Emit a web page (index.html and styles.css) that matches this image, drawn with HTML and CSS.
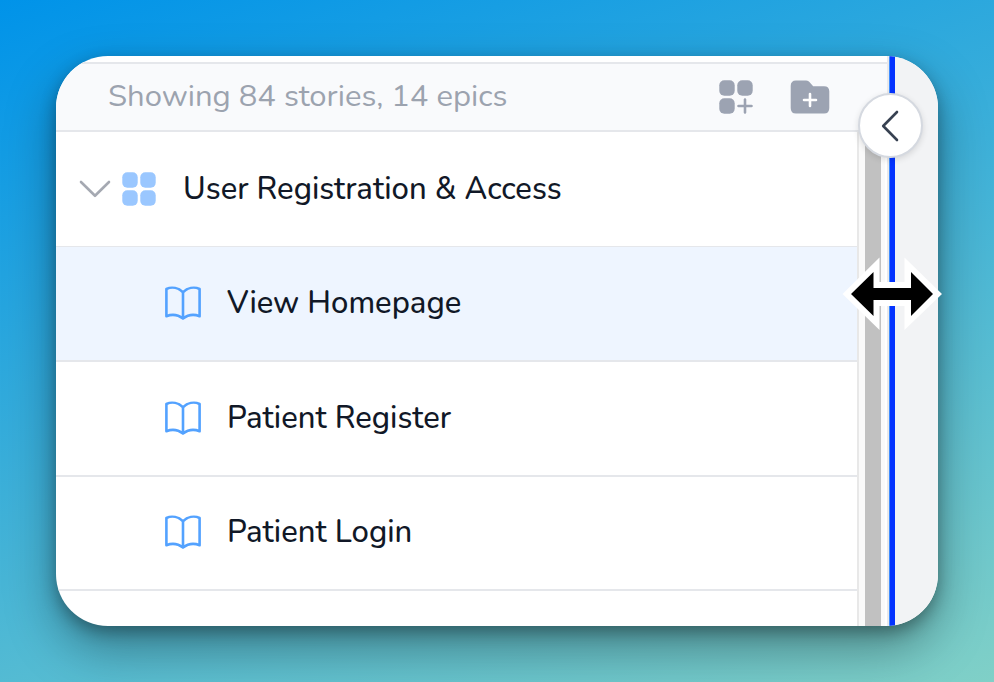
FILE: index.html
```
<!DOCTYPE html>
<html lang="en">
<head>
  <meta charset="UTF-8" />
  <meta name="viewport" content="width=device-width, initial-scale=1.0"/>
  <title>Stories</title>
  <link rel="stylesheet" href="styles.css">
</head>
<body>
  <!-- Shared icons -->
  <svg class="sprite">
    <symbol id="book" viewBox="0 0 38 36">
      <path d="M19 7.2C14.5 3 8 1.4 2.4 4V31.2C8 29 14.5 30 19 33.6C23.5 30 30 29 35.6 31.2V4C30 1.4 23.5 3 19 7.2ZM19 7.2V33" fill="none" stroke="#53a2ff" stroke-width="2.6" stroke-linejoin="round"/>
    </symbol>
  </svg>

  <div class="card">
    <div class="main">
      <div class="header">
        <span class="summary">Showing 84 stories, 14 epics</span>
        <svg class="add-epic" viewBox="0 0 34 34" fill="#9ca3b2">
          <rect x="0.3" y="0.3" width="15.4" height="15.4" rx="5"/>
          <rect x="18.3" y="0.3" width="15.4" height="15.4" rx="5"/>
          <rect x="0.3" y="18.3" width="15.4" height="15.4" rx="5"/>
          <path d="M26 19.5V32.5M19.5 26H32.5" stroke="#9ca3b2" stroke-width="2.6" stroke-linecap="round"/>
        </svg>
        <svg class="add-folder" viewBox="0 0 40 34">
          <path d="M6 0.5H16C18.3 0.5 19 1.5 20.3 3L23.2 6.3H34Q39.3 6.3 39.3 11.5V28Q39.3 33.5 34 33.5H6Q0.7 33.5 0.7 28V6Q0.7 0.5 6 0.5Z" fill="#9ca3b2"/>
          <path d="M20 14V26M14 20H26" stroke="#fff" stroke-width="2.6" stroke-linecap="round"/>
        </svg>
      </div>

      <div class="body">
        <div class="list">
          <div class="row epic">
            <svg class="chevron" viewBox="0 0 32 18">
              <path d="M2 2L16 15.8L30 2" fill="none" stroke="#a5a9b2" stroke-width="2.6" stroke-linecap="round" stroke-linejoin="round"/>
            </svg>
            <svg class="epic-icon" viewBox="0 0 34 34" fill="#9ac7ff">
              <rect x="0.3" y="0.3" width="15.4" height="15.4" rx="5"/>
              <rect x="18.3" y="0.3" width="15.4" height="15.4" rx="5"/>
              <rect x="0.3" y="18.3" width="15.4" height="15.4" rx="5"/>
              <rect x="18.3" y="18.3" width="15.4" height="15.4" rx="5"/>
            </svg>
            <span class="title">User Registration &amp; Access</span>
          </div>
          <div class="row story selected">
            <svg class="book"><use href="#book"/></svg>
            <span class="title">View Homepage</span>
          </div>
          <div class="row story">
            <svg class="book"><use href="#book"/></svg>
            <span class="title">Patient Register</span>
          </div>
          <div class="row story">
            <svg class="book"><use href="#book"/></svg>
            <span class="title">Patient Login</span>
          </div>
        </div>
        <div class="scrollbar"><div class="thumb"></div></div>
      </div>
    </div>
    <div class="resizer"></div>
    <div class="side"></div>
  </div>

  <!-- Collapse button and resize cursor sit over the divider -->
  <div class="collapse">
    <svg viewBox="0 0 18 32">
      <path d="M16 2L2.2 16L16 30" fill="none" stroke="#374151" stroke-width="2.6" stroke-linecap="round" stroke-linejoin="round"/>
    </svg>
  </div>
  <svg class="cursor" viewBox="0 0 101 74">
    <path d="M0.5 37L37.5 0.5V25H62.5V0.5L100 37L62.5 73V49H37.5V73Z" fill="#fff"/>
    <path d="M9 37L31.5 15V31H69V15L91 37L69 59V43H31.5V59Z" fill="#000"/>
  </svg>
</body>
</html>
```
FILE: styles.css
```
* {
  box-sizing: border-box;
}
body {
  margin: 0;
  padding: 56px;
  height: 682px;
  position: relative;
  overflow: hidden;
  font-family: Nunito, Lato, sans-serif;
  background: linear-gradient(160deg, #0093e9 0%, #80d0c7 100%);
}
svg {
  display: block;
  flex: none;
}
.sprite {
  display: none;
}
.card {
  display: flex;
  width: 882px;
  height: 570px;
  border-radius: 52px;
  overflow: hidden;
  background: #fff;
  box-shadow: 0 22px 50px rgba(0, 0, 0, 0.35), 0 6px 16px rgba(0, 0, 0, 0.3);
}
.main {
  width: 831px;
  padding-top: 6px;
  display: flex;
  flex-direction: column;
}
.header {
  height: 70px;
  display: flex;
  align-items: center;
  padding-left: 52px;
  background: #f9fafc;
  border-top: 2px solid #e5e7eb;
  border-bottom: 2px solid #e5e7eb;
}
.summary {
  width: 611px;
  padding-bottom: 2px;
  font-size: 31px;
  line-height: 40px;
  white-space: nowrap;
  color: #9ca3af;
}
.add-epic {
  width: 34px;
  height: 34px;
}
.add-folder {
  width: 40px;
  height: 34px;
  margin-left: 37px;
}
.body {
  flex: 1;
  display: flex;
}
.list {
  width: 801px;
}
.row {
  display: flex;
  align-items: center;
  height: 115px;
  border-bottom: 2px solid #e5e7eb;
}
.row:last-child {
  height: 114px;
}
.epic {
  padding-left: 23px;
  border-bottom: 1px solid #e5e7eb;
}
.story {
  padding-left: 108px;
  padding-bottom: 2px;
}
.selected {
  background: #eef5ff;
}
.chevron {
  width: 32px;
  height: 18px;
}
.epic-icon {
  width: 34px;
  height: 34px;
  margin-left: 11px;
}
.book {
  width: 38px;
  height: 36px;
}
.title {
  font-size: 31px;
  line-height: 40px;
  white-space: nowrap;
  color: #111827;
  font-weight: 500;
  margin-left: 25px;
}
.epic .title {
  margin-left: 27px;
}
.scrollbar {
  width: 28px;
  padding: 0 4px 0 6px;
  background: #fafafa;
  border-left: 2px solid #e8e8e8;
}
.thumb {
  width: 16px;
  height: 100%;
  background: #c1c1c1;
}
.resizer {
  width: 8px;
  border-left: 2px solid #e8e9eb;
  background: linear-gradient(90deg, #3f8cff 1px, #0433ff 1px);
}
.side {
  flex: 1;
  background: #f2f3f5;
}
.collapse {
  position: absolute;
  left: 858px;
  top: 93px;
  width: 65px;
  height: 65px;
  display: flex;
  align-items: center;
  justify-content: center;
  padding-right: 2px;
  border: 2px solid #d5d9e0;
  border-radius: 50%;
  background: #fff;
  box-shadow: 0 2px 6px rgba(0, 0, 0, 0.12);
}
.collapse svg {
  width: 18px;
  height: 32px;
}
.cursor {
  position: absolute;
  left: 842px;
  top: 257px;
  width: 101px;
  height: 74px;
}
```
